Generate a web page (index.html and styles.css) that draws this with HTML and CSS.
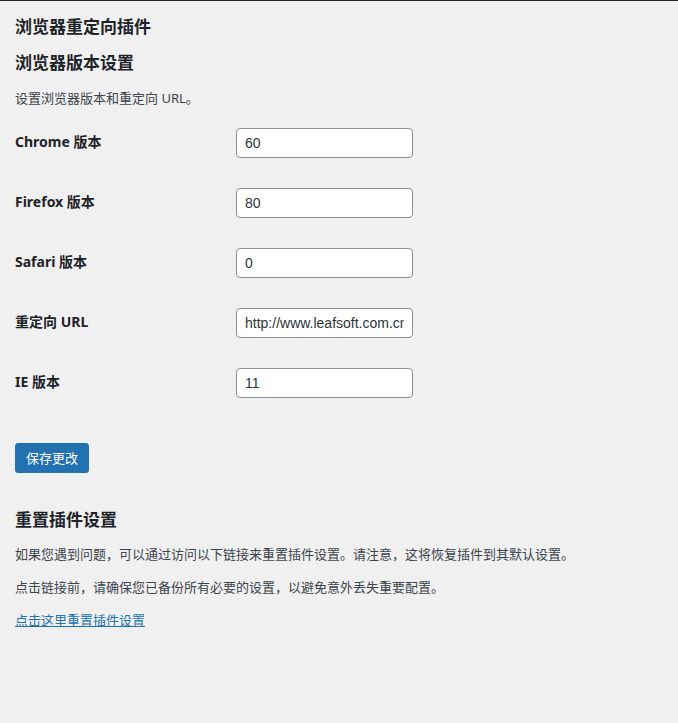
FILE: index.html
```html
<!DOCTYPE html>
<html lang="zh-CN">
<head>
<meta charset="utf-8">
<title>浏览器重定向插件</title>
<link rel="stylesheet" href="styles.css">
</head>
<body>
<div class="wrap">
  <h1 class="page-title">浏览器重定向插件</h1>
  <h2 class="section-title">浏览器版本设置</h2>
  <p class="desc">设置浏览器版本和重定向 URL。</p>
  <div class="form-table">
    <div class="row"><label class="label" for="chrome">Chrome 版本</label><input class="field" id="chrome" type="text" value="60"></div>
    <div class="row"><label class="label" for="firefox">Firefox 版本</label><input class="field" id="firefox" type="text" value="80"></div>
    <div class="row"><label class="label" for="safari">Safari 版本</label><input class="field" id="safari" type="text" value="0"></div>
    <div class="row"><label class="label" for="url">重定向 URL</label><input class="field" id="url" type="text" value="http://www.leafsoft.com.cn"></div>
    <div class="row"><label class="label" for="ie">IE 版本</label><input class="field" id="ie" type="text" value="11"></div>
  </div>
  <div class="submit"><button class="button-primary" type="button">保存更改</button></div>
  <h2 class="section-title reset-title">重置插件设置</h2>
  <p class="text">如果您遇到问题，可以通过访问以下链接来重置插件设置。请注意，这将恢复插件到其默认设置。</p>
  <p class="text">点击链接前，请确保您已备份所有必要的设置，以避免意外丢失重要配置。</p>
  <p class="text"><a class="link" href="#">点击这里重置插件设置</a></p>
</div>
</body>
</html>
```
FILE: styles.css
```css
html, body {
  margin: 0;
  padding: 0;
}
body {
  background: #f0f0f1;
  border-top: 1px solid #1d2327;
  color: #3c434a;
  font-family: "Noto Sans", "Noto Sans CJK SC", sans-serif;
  font-size: 13px;
  line-height: 1.5;
  min-height: 722px;
}
.wrap {
  padding: 15px 15px 0 15px;
}
.page-title, .section-title {
  margin: 0;
  font-size: 17px;
  line-height: 22px;
  font-weight: 700;
  color: #1d2327;
}
.section-title {
  margin-top: 14px;
}
.desc {
  margin: 14px 0 0 0;
  line-height: 20px;
}
.form-table {
  margin-top: 5px;
  display: flex;
  flex-direction: column;
}
.row {
  display: grid;
  grid-template-columns: 221px 177px;
  align-items: center;
  height: 60px;
}
.label {
  font-size: 14px;
  font-weight: 700;
  color: #1d2327;
  line-height: 18px;
  margin-top: -2px;
}
.field {
  box-sizing: border-box;
  width: 177px;
  height: 30px;
  margin: 0;
  padding: 0 8px;
  border: 1px solid #8c8f94;
  border-radius: 4px;
  background: #fff;
  color: #2c3338;
  font-family: "Liberation Sans", "Noto Sans CJK SC", sans-serif;
  font-size: 14px;
}
.submit {
  margin-top: 30px;
}
.button-primary {
  box-sizing: border-box;
  height: 30px;
  padding: 0 10px;
  border: 1px solid #2271b1;
  border-radius: 3px;
  background: #2271b1;
  color: #fff;
  font-family: "Noto Sans", "Noto Sans CJK SC", sans-serif;
  font-size: 13px;
  line-height: 28px;
}
.reset-title {
  margin-top: 36px;
}
.text {
  margin: 13px 0 0 0;
  line-height: 20px;
}
.link {
  color: #2271b1;
  text-decoration: underline;
}
```
